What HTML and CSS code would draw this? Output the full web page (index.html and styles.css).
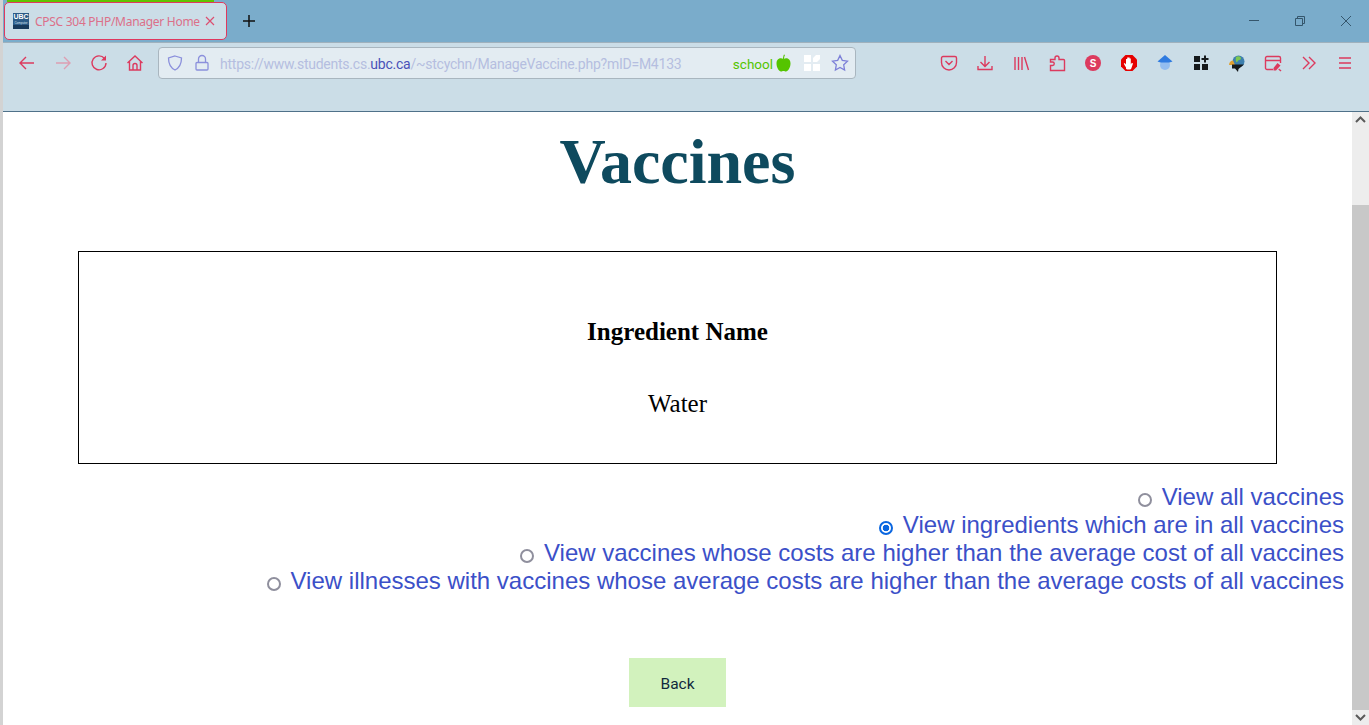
FILE: index.html
```html
<!DOCTYPE html>
<html>
  <head>
    <meta charset="utf-8">
    <title>CPSC 304 PHP/Manager Home</title>
    <link rel="stylesheet" href="styles.css">
  </head>
  <body>
    <div class="window">
      <div class="titlebar">
        <div class="tab-slot">
          <div class="tab-line"></div>
          <div class="tab">
            <div class="favicon"><span class="favicon-text">UBC</span><span class="favicon-sub">Computer</span><span class="favicon-foot"></span></div>
            <span class="tab-title">CPSC 304 PHP/Manager Home</span>
            <svg class="tab-close" width="10" height="10" viewBox="0 0 10 10"><path d="M1 1l8 8M9 1l-8 8"/></svg>
          </div>
        </div>
        <svg class="new-tab" width="12" height="12" viewBox="0 0 12 12"><path d="M6 0v12M0 6h12"/></svg>
        <div class="window-controls">
          <svg width="46" height="12" viewBox="0 0 46 12"><path d="M18 5.500h10"/></svg>
          <svg width="46" height="12" viewBox="0 0 46 12"><path d="M18.500 3.500h7v7h-7zM20.500 3.500v-2h7v7h-2"/></svg>
          <svg width="46" height="12" viewBox="0 0 46 12"><path d="M18 1l10 10M28 1l-10 10"/></svg>
        </div>
      </div>

      <div class="toolbar">
        <div class="nav-group">
          <div class="tool"><svg width="18" height="18" viewBox="0 0 18 18"><path d="M16 9H2M8 3L2 9l6 6"/></svg></div>
          <div class="tool dim"><svg width="18" height="18" viewBox="0 0 18 18"><path d="M2 9h14M10 3l6 6-6 6"/></svg></div>
          <div class="tool"><svg width="18" height="18" viewBox="0 0 18 18"><path d="M14.500 4.500A7 7 0 1 0 16 9"/><path class="solid" d="M16 1.500v5h-5z"/></svg></div>
          <div class="tool"><svg width="18" height="18" viewBox="0 0 18 18"><path d="M1.500 9L9 2l7.500 7M3.500 7.500V16h11V7.500M7 16v-4.500a2 2 0 0 1 4 0V16"/></svg></div>
        </div>
        <div class="urlbar">
          <svg class="url-icon" width="18" height="18" viewBox="0 0 18 18"><path d="M9 2l6.500 2c0 6-1.500 9.500-6.500 12C4 13.500 2.500 10 2.500 4z"/></svg>
          <svg class="url-icon lock" width="14" height="18" viewBox="0 0 14 18"><path d="M2 8.500h10a1 1 0 0 1 1 1V15a1 1 0 0 1-1 1H2a1 1 0 0 1-1-1V9.500a1 1 0 0 1 1-1zM3.500 8.500V5a3.500 3.500 0 0 1 7 0v3.500"/></svg>
          <span class="url-text">https://www.students.cs.<b class="url-host">ubc.ca</b>/~stcychn/ManageVaccine.php?mID=M4133</span>
          <span class="school">school</span>
          <svg class="apple" width="15" height="18" viewBox="0 0 15 18"><path d="M7.500 5C10 3.500 14.500 4 14.500 9.500c0 4-2.500 8-4.500 8-1 0-1.500-.5-2.500-.5s-1.500.5-2.500.5c-2 0-4.500-4-4.500-8C.5 4 5 3.500 7.500 5z"/><path d="M7 5c0-2 .5-3.500 1-4.500l1 .5C8.500 2 8 3.500 8 5z"/></svg>
          <svg class="qr" width="16" height="16" viewBox="0 0 16 16"><path d="M0 0h7v7H0zM0 9h7v7H0zM9 9h7v7H9zM9 3l3-3h4v4l-3 3H9z"/></svg>
          <svg class="star" width="18" height="18" viewBox="0 0 18 18"><path d="M9 1.500l2.300 4.900 5.200.7-3.800 3.700.9 5.300L9 13.500l-4.600 2.600.9-5.300L1.500 7.100l5.200-.7z"/></svg>
        </div>
        <div class="tools-right">
          <div class="tool"><svg width="18" height="18" viewBox="0 0 18 18"><path d="M3 2.500h12a1.500 1.500 0 0 1 1.500 1.500v4.500a7.500 7.500 0 0 1-15 0V4A1.500 1.500 0 0 1 3 2.500zM5.500 7L9 10.500 12.500 7"/></svg></div>
          <div class="tool"><svg width="18" height="18" viewBox="0 0 18 18"><path d="M9 2v10M4.500 8L9 12.500 13.500 8M2 12v3.500h14V12"/></svg></div>
          <div class="tool"><svg width="18" height="18" viewBox="0 0 18 18"><path d="M3 3v13M6.500 3v13M10 3v13M12.500 3l4 13"/></svg></div>
          <div class="tool"><svg width="18" height="18" viewBox="0 0 18 18"><path d="M2.500 16.500v-5h2a1.600 1.600 0 0 0 0-3.500h-2V5.500H7V4a2 2 0 0 1 4 0v1.500h4.500a1 1 0 0 1 1 1v10z"/></svg></div>
          <div class="tool"><svg width="18" height="18" viewBox="0 0 18 18"><circle class="solid" cx="9" cy="9" r="8"/><text class="badge-s" x="9" y="12.500">S</text></svg></div>
          <div class="tool"><svg width="18" height="18" viewBox="0 0 18 18"><path class="stop" d="M5.500 1h7L17 5.500v7L12.500 17h-7L1 12.500v-7z"/><path class="hand" d="M6 13.500L3.800 9.800l1-.7L6 10.500V5h1.200v4.500V3.500h1.200v6V3.500h1.200v6V4.500h1.200v6l1-1.700 1.200.6-1.700 5a1.500 1.500 0 0 1-1.400 1H7.500A1.500 1.500 0 0 1 6 13.500z"/></svg></div>
          <div class="tool"><svg width="18" height="18" viewBox="0 0 18 18"><circle class="cap-ball" cx="9" cy="11" r="5"/><path class="cap-top" d="M9 1l7.500 6.500-3 1H4.500l-3-1z"/></svg></div>
          <div class="tool"><svg width="18" height="18" viewBox="0 0 18 18"><path class="ink" d="M2 2h6v6H2zM2 10h6v6H2zM10 10h6v6h-6zM12 1.500h2v2.500h2.500v2H14v2.500h-2V6H9.500V4H12z"/></svg></div>
          <div class="tool"><svg width="18" height="18" viewBox="0 0 18 18"><circle class="globe" cx="10.500" cy="7.500" r="6"/><path class="land" d="M8 3c2-1.500 5-.5 5 1.500s-3 1-3.500 3-2.500 0-1.500-4.500z"/><path class="rainbow" d="M1 11c0-3 2-4.500 4-4.500L7 11z"/><path class="ink" d="M4 10.500h12L10.500 15l-.5 3-3-3.500H4z"/></svg></div>
          <div class="tool"><svg width="18" height="18" viewBox="0 0 18 18"><path d="M9 15.500H3A1.500 1.500 0 0 1 1.500 14V4A1.500 1.500 0 0 1 3 2.500h12A1.500 1.500 0 0 1 16.500 4v5M1.500 6.500h15"/><path class="solid" d="M9.500 14l4-5 3 2.500-4.500 5H9.500zM15 14.500l2.500 2-1 1-2.200-2z"/></svg></div>
          <div class="tool"><svg width="18" height="18" viewBox="0 0 18 18"><path d="M3 3l6 6-6 6M9 3l6 6-6 6"/></svg></div>
          <div class="tool"><svg width="18" height="18" viewBox="0 0 18 18"><path d="M3 4h12M3 9h12M3 14h12"/></svg></div>
        </div>
      </div>

      <div class="viewport">
        <div class="page">
          <h1 class="heading">Vaccines</h1>
          <div class="result-box">
            <table class="result-table">
              <tr><th>Ingredient Name</th></tr>
              <tr><td>Water</td></tr>
            </table>
          </div>
          <form class="query-form">
            <label class="query-option"><input type="radio" name="query"> View all vaccines</label>
            <label class="query-option"><input type="radio" name="query" checked> View ingredients which are in all vaccines</label>
            <label class="query-option"><input type="radio" name="query"> View vaccines whose costs are higher than the average cost of all vaccines</label>
            <label class="query-option"><input type="radio" name="query"> View illnesses with vaccines whose average costs are higher than the average costs of all vaccines</label>
          </form>
          <div class="back-row"><button class="back-btn" type="button">Back</button></div>
        </div>
        <div class="scrollbar">
          <div class="scroll-arrow"><svg width="11" height="7" viewBox="0 0 11 7"><path d="M1 6l4.500-4.500L10 6"/></svg></div>
          <div class="scroll-track"><div class="scroll-thumb"></div></div>
          <div class="scroll-arrow"><svg width="11" height="7" viewBox="0 0 11 7"><path d="M1 1l4.500 4.500L10 1"/></svg></div>
        </div>
      </div>
    </div>
  </body>
</html>
```

FILE: styles.css
```css
html, body {
  margin: 0;
  padding: 0;
  height: 100%;
  overflow: hidden;
}
body {
  background-color: #d3d3d3;
}
.window {
  display: flex;
  flex-direction: column;
  height: 725px;
  padding-left: 3px;
  box-sizing: border-box;
}

/* title bar */
.titlebar {
  display: flex;
  align-items: flex-start;
  flex: none;
  height: 43px;
  padding-left: 1px;
  box-sizing: border-box;
  background-color: #7aaccb;
  border-bottom: 1px solid #9fb1bd;
}
.tab-slot {
  display: flex;
  flex-direction: column;
  width: 223px;
}
.tab-line {
  height: 2px;
  margin: 0 13px 0 3px;
  background-color: #5fc400;
}
.tab {
  display: flex;
  align-items: center;
  height: 38px;
  box-sizing: border-box;
  padding: 0 11px 0 8px;
  border: 1px solid #e0385e;
  border-radius: 5px;
  background-color: #cbdde7;
}
.favicon {
  display: flex;
  flex-direction: column;
  width: 16px;
  height: 16px;
  flex: none;
  margin-right: 6px;
  background-color: #2a5a86;
  overflow: hidden;
}
.favicon-text {
  color: #fff;
  font: bold 7px/8px "Liberation Sans", sans-serif;
  text-align: center;
}
.favicon-sub {
  color: #d8e4ee;
  font: 3px/4px "Liberation Sans", sans-serif;
  text-align: center;
}
.favicon-foot {
  flex: 1;
  background-color: #17395a;
}
.tab-title {
  flex: 1;
  min-width: 0;
  color: #dc7089;
  font: 12px "Noto Sans", sans-serif;
  letter-spacing: -0.280px;
  white-space: nowrap;
}
.tab-close {
  flex: none;
  fill: none;
  stroke: #dc4f70;
  stroke-width: 1.200;
}
.new-tab {
  margin: 15px 0 0 16px;
  fill: none;
  stroke: #111;
  stroke-width: 1.500;
}
.window-controls {
  display: flex;
  margin-left: auto;
  padding: 15px 0 0 0;
}
.window-controls svg {
  fill: none;
  stroke: #35566c;
  stroke-width: 1;
}

/* toolbar */
.toolbar {
  display: flex;
  align-items: flex-start;
  flex: none;
  height: 69px;
  box-sizing: border-box;
  padding: 4px 6px 0 6px;
  background-color: #cbdde7;
  border-bottom: 1px solid #4f7189;
}
.nav-group {
  display: flex;
}
.tools-right {
  display: flex;
  margin-left: auto;
}
.tool {
  display: flex;
  align-items: center;
  justify-content: center;
  width: 36px;
  height: 32px;
}
.tool svg {
  fill: none;
  stroke: #dc3a5e;
  stroke-width: 1.400;
}
.tool.dim svg {
  stroke: #dd9fb3;
}
.tool .solid {
  fill: #dc3a5e;
  stroke: none;
}
.tool .badge-s {
  fill: #fff;
  stroke: none;
  font: bold 10px "Liberation Sans", sans-serif;
  text-anchor: middle;
}
.tool .stop {
  fill: #e60000;
  stroke: none;
}
.tool .hand {
  fill: #fff;
  stroke: none;
}
.tool .cap-ball {
  fill: #93bdf0;
  stroke: none;
}
.tool .cap-top {
  fill: #2f7be0;
  stroke: none;
}
.tool .ink {
  fill: #15191c;
  stroke: none;
}
.tool .globe {
  fill: #3d7fae;
  stroke: none;
}
.tool .land {
  fill: #7ec850;
  stroke: none;
}
.tool .rainbow {
  fill: #e0a030;
  stroke: none;
}
.urlbar {
  display: flex;
  align-items: center;
  width: 698px;
  height: 32px;
  margin-left: 5px;
  box-sizing: border-box;
  padding: 0 6px 0 7px;
  border: 1px solid #a9b6bf;
  border-radius: 4px;
  background-color: #e3ecf2;
}
.url-icon {
  flex: none;
  fill: none;
  stroke: #8b90dc;
  stroke-width: 1.300;
}
.url-icon.lock {
  margin-left: 11px;
}
.url-text {
  margin: 1px 0 0 11px;
  color: #b5bee0;
  font: 14px Roboto, sans-serif;
  letter-spacing: -0.240px;
  white-space: nowrap;
}
.url-host {
  color: #4a52b8;
  font-weight: normal;
}
.school {
  margin: 1px 0 0 auto;
  color: #55c400;
  font: 13.500px Roboto, sans-serif;
}
.apple {
  margin-left: 3px;
  fill: #55c400;
}
.qr {
  margin-left: 13px;
  fill: #fff;
}
.star {
  margin-left: 11px;
  fill: none;
  stroke: #7d80d8;
  stroke-width: 1.300;
}

/* page */
.viewport {
  display: flex;
  flex: 1;
  min-height: 0;
  background-color: #fff;
}
.page {
  flex: 1;
  min-width: 0;
  overflow: hidden;
}
.heading {
  margin: 14px 0 0 0;
  color: #0e4a5e;
  font: bold 64px/72px "Liberation Serif", serif;
  text-align: center;
}
.result-box {
  height: 213px;
  box-sizing: border-box;
  margin: 53px 75px 0 75px;
  padding: 44px 0 0 0;
  border: 1px solid #000;
}
.result-table {
  width: 100%;
  border-spacing: 0;
  font-family: "Liberation Serif", serif;
  font-size: 25px;
  text-align: center;
}
.result-table th, .result-table td {
  height: 72px;
  padding: 0;
}
.query-form {
  display: flex;
  flex-direction: column;
  align-items: flex-end;
  margin-top: 19px;
  padding-right: 8px;
}
.query-option {
  color: #3b50c8;
  font: 24px/28px "Liberation Sans", sans-serif;
  white-space: nowrap;
}
.query-option input {
  appearance: none;
  width: 14px;
  height: 14px;
  margin: 0 3px 0 0;
  box-sizing: border-box;
  border: 2px solid #8f8f9d;
  border-radius: 50%;
  background-color: #fff;
  vertical-align: -2px;
}
.query-option input:checked {
  border-color: #0a66e0;
  background: radial-gradient(circle, #0a66e0 3px, #fff 3.600px);
}
.back-row {
  display: flex;
  justify-content: center;
  margin-top: 63px;
}
.back-btn {
  width: 97px;
  height: 49px;
  padding: 2px 0 0 0;
  border: 0;
  background-color: #d2f2bd;
  color: #10283c;
  font: 15.500px Roboto, sans-serif;
}

/* scrollbar */
.scrollbar {
  display: flex;
  flex-direction: column;
  flex: none;
  width: 17px;
  background-color: #ededed;
}
.scroll-arrow {
  display: flex;
  align-items: center;
  justify-content: center;
  flex: none;
  height: 15px;
}
.scroll-arrow svg {
  fill: none;
  stroke: #5a5a5a;
  stroke-width: 2;
}
.scroll-track {
  flex: 1;
  padding-top: 78px;
}
.scroll-thumb {
  height: 505px;
  background-color: #c8c8c8;
}
```
